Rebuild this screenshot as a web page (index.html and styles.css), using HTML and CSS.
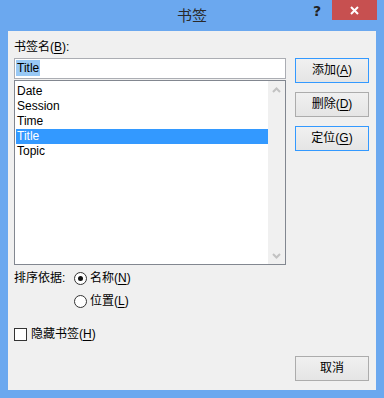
FILE: index.html
```html
<!DOCTYPE html>
<html lang="zh-CN">
<head>
<meta charset="utf-8">
<title>书签</title>
<link rel="stylesheet" href="styles.css">
</head>
<body>
<div class="window">
  <div class="titlebar">
    <div class="title">书签</div>
    <div class="help">?</div>
    <div class="close">
      <svg width="9" height="9" viewBox="0 0 9 9"><path d="M1 1 L8 8 M8 1 L1 8" stroke="#fff" stroke-width="2" fill="none"/></svg>
    </div>
  </div>
  <div class="client">
    <div class="label">书签名(<u>B</u>):</div>
    <div class="main">
      <div class="left">
        <div class="input"><span class="sel">Title</span></div>
        <div class="list">
          <div class="items">
            <div class="item">Date</div>
            <div class="item">Session</div>
            <div class="item">Time</div>
            <div class="item selected">Title</div>
            <div class="item">Topic</div>
          </div>
          <div class="scrollbar">
            <div class="arrow"><svg width="9" height="6" viewBox="0 0 9 6"><path d="M1 5 L4.5 1.5 L8 5" stroke="#c2c2c2" stroke-width="2" fill="none"/></svg></div>
            <div class="arrow"><svg width="9" height="6" viewBox="0 0 9 6"><path d="M1 1 L4.5 4.5 L8 1" stroke="#c2c2c2" stroke-width="2" fill="none"/></svg></div>
          </div>
        </div>
      </div>
      <div class="buttons">
        <div class="btn focus">添加(<u>A</u>)</div>
        <div class="btn">删除(<u>D</u>)</div>
        <div class="btn focus">定位(<u>G</u>)</div>
      </div>
    </div>
    <div class="sort">
      <div class="sort-label">排序依据:</div>
      <div class="radios">
        <div class="radio-row"><span class="radio checked"></span>名称(<u>N</u>)</div>
        <div class="radio-row"><span class="radio"></span>位置(<u>L</u>)</div>
      </div>
    </div>
    <div class="check-row"><span class="checkbox"></span>隐藏书签(<u>H</u>)</div>
    <div class="footer"><div class="btn">取消</div></div>
  </div>
</div>
</body>
</html>
```
FILE: styles.css
```css
html, body {
  margin: 0;
  padding: 0;
}
body {
  font-family: "Liberation Sans", "Noto Sans CJK SC", sans-serif;
  font-size: 12px;
  color: #000;
}
.window {
  width: 384px;
  height: 398px;
  background: #6ba8ef;
  display: flex;
  flex-direction: column;
}
.titlebar {
  height: 31px;
  display: flex;
  align-items: flex-start;
  flex-shrink: 0;
}
.title {
  flex: 1;
  padding-left: 82px;
  text-align: center;
  font-size: 15px;
  line-height: 30px;
  color: #2a2a2a;
  font-family: "Noto Sans CJK SC", sans-serif;
}
.help {
  width: 30px;
  height: 20px;
  text-align: center;
  font-family: "DejaVu Sans", sans-serif;
  font-weight: bold;
  font-size: 14px;
  line-height: 22px;
  color: #222;
}
.close {
  width: 45px;
  height: 20px;
  margin-right: 7px;
  background: #c75050;
  display: flex;
  align-items: center;
  justify-content: center;
}
.close svg { display: block; }
.client {
  flex: 1;
  margin: 0 8px 8px 8px;
  background: #f0f0f0;
  padding: 8px 7px 0 6px;
  display: flex;
  flex-direction: column;
}
.label {
  line-height: 16px;
  height: 16px;
  margin-bottom: 3px;
}
u {
  text-decoration: underline;
  text-underline-offset: 2px;
}
.main {
  display: flex;
  gap: 9px;
}
.left {
  width: 272px;
  display: flex;
  flex-direction: column;
}
.input {
  box-sizing: border-box;
  height: 21px;
  border: 1px solid #abadb3;
  background: #fff;
  padding: 1px 0 0 1px;
}
.sel {
  display: inline-block;
  background: #99c9f5;
  line-height: 16px;
  padding: 0 1px;
  color: #000;
}
.list {
  box-sizing: border-box;
  margin-top: 1px;
  height: 185px;
  border: 1px solid #828790;
  background: #fff;
  display: flex;
}
.items {
  flex: 1;
  padding: 3px 0 0 1px;
}
.item {
  line-height: 15px;
  height: 15px;
  padding-left: 1px;
}
.item.selected {
  background: #3399ff;
  color: #fff;
}
.scrollbar {
  width: 17px;
  background: #f0f0f0;
  display: flex;
  flex-direction: column;
  justify-content: space-between;
}
.arrow {
  height: 17px;
  display: flex;
  align-items: center;
  justify-content: center;
}
.arrow svg { display: block; }
.buttons {
  width: 74px;
  display: flex;
  flex-direction: column;
  gap: 9px;
}
.btn {
  box-sizing: border-box;
  width: 74px;
  height: 25px;
  border: 1px solid #acacac;
  background: linear-gradient(#f0f0f0, #e5e5e5);
  text-align: center;
  line-height: 23px;
}
.btn.focus {
  border-color: #3399ff;
}
.sort {
  margin-top: 5px;
  display: flex;
}
.sort-label {
  width: 60px;
  line-height: 16px;
}
.radios {
  display: flex;
  flex-direction: column;
  gap: 7px;
}
.radio-row, .check-row {
  display: flex;
  align-items: center;
  height: 16px;
  line-height: 16px;
}
.radio {
  box-sizing: border-box;
  width: 13px;
  height: 13px;
  border: 1px solid #333;
  border-radius: 50%;
  background: #fff;
  margin-right: 3px;
  display: flex;
  align-items: center;
  justify-content: center;
}
.radio.checked::after {
  content: "";
  width: 5px;
  height: 5px;
  border-radius: 50%;
  background: #111;
}
.check-row {
  margin-top: 17px;
}
.checkbox {
  box-sizing: border-box;
  width: 13px;
  height: 13px;
  border: 1px solid #333;
  background: #fff;
  margin-right: 4px;
}
.footer {
  margin-top: auto;
  padding-bottom: 9px;
  display: flex;
  justify-content: flex-end;
}
```
